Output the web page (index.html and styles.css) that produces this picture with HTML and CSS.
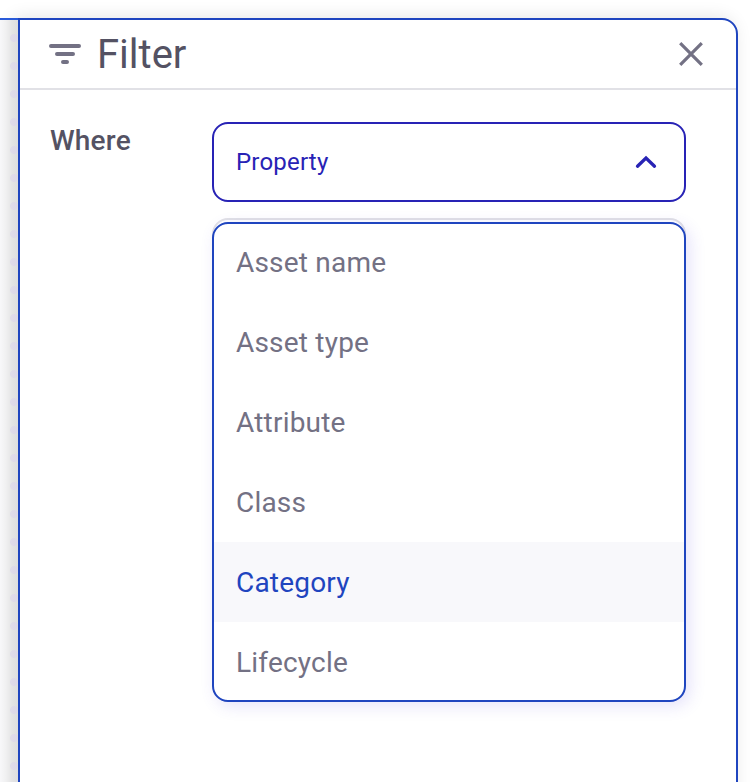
FILE: index.html
```html
<!DOCTYPE html>
<html lang="en">
<head>
<meta charset="utf-8">
<title>Filter</title>
<link rel="stylesheet" href="styles.css">
</head>
<body>
<main class="workspace">
  <div class="canvas"></div>
  <section class="panel">
    <header class="panel-header">
      <svg class="filter-icon" width="32" height="20" viewBox="0 0 32 20" fill="none" stroke="currentColor" stroke-width="4" stroke-linecap="round"><path d="M2 2H30M8 10H24M14 18H18"/></svg>
      <h1 class="title">Filter</h1>
      <button class="close" aria-label="Close"><svg width="24" height="24" viewBox="0 0 24 24" fill="none" stroke="currentColor" stroke-width="3.2"><path d="M1.2 1.2L22.8 22.8M22.8 1.2L1.2 22.8"/></svg></button>
    </header>
    <div class="panel-body">
      <span class="label">Where</span>
      <div class="field">
        <button class="select"><span class="select-text">Property</span><svg width="22" height="14" viewBox="0 0 22 14" fill="none" stroke="currentColor" stroke-width="3.3" stroke-linecap="round" stroke-linejoin="miter"><path d="M2.5 11.2L11 3L19.5 11.2"/></svg></button>
        <div class="next-field">
          <ul class="menu">
            <li class="option">Asset name</li>
            <li class="option">Asset type</li>
            <li class="option">Attribute</li>
            <li class="option">Class</li>
            <li class="option active">Category</li>
            <li class="option">Lifecycle</li>
          </ul>
        </div>
      </div>
    </div>
  </section>
</main>
</body>
</html>
```
FILE: styles.css
```css
* { box-sizing: border-box; }
body {
  margin: 0;
  height: 782px;
  overflow: hidden;
  background: #fff;
  color: #545263;
  font-family: Roboto, sans-serif;
}
.workspace {
  display: grid;
  grid-template-columns: 18px 720px;
  height: 782px;
  padding-top: 18px;
}
.canvas {
  z-index: 1;
  border-top: 2px solid #2a5bd9;
  background:
    radial-gradient(circle at 14px 14px, rgba(220, 212, 236, .6) 3.6px, transparent 4.4px) 0 4px / 28px 28px,
    linear-gradient(to right, #f8f8fa 0, #f0f0f1 6px, #e4e4e5 12px, #dededf 18px);
}
.panel {
  height: 784px;
  border: 2px solid #1f45bf;
  border-top-right-radius: 16px;
  background: #fff;
  box-shadow: -4px 0 18px rgba(0, 0, 0, .12);
}
.panel-header {
  display: flex;
  align-items: center;
  height: 70px;
  padding: 0 33px 0 29px;
  border-bottom: 2px solid #e1e1e6;
}
.filter-icon { color: #737184; }
.title {
  margin: 0 auto 0 16px;
  padding-top: 2px;
  font-size: 40px;
  font-weight: 400;
  line-height: 48px;
}
.close {
  display: flex;
  padding: 0;
  border: 0;
  background: none;
  color: #737184;
}
.panel-body {
  display: grid;
  grid-template-columns: 162px 474px;
  padding: 32px 0 0 30px;
}
.label {
  padding-top: 1px;
  font-size: 28px;
  font-weight: 500;
  line-height: 36px;
  letter-spacing: .2px;
}
.select {
  display: flex;
  align-items: center;
  justify-content: space-between;
  width: 100%;
  height: 80px;
  padding: 0 27px 0 22px;
  border: 2px solid #2823b5;
  border-radius: 16px;
  background: #fff;
  color: #2823b5;
  font: 400 24px/32px Roboto, sans-serif;
  letter-spacing: .2px;
}
.next-field {
  height: 80px;
  margin-top: 16px;
  padding-top: 2px;
  border: 2px solid #e1e1e6;
  border-radius: 16px;
}
.menu {
  width: 474px;
  height: 480px;
  margin: 0 -2px;
  padding: 0;
  overflow: hidden;
  list-style: none;
  border: 2px solid #1f45bf;
  border-radius: 16px;
  background: #fff;
  box-shadow: 4px 4px 16px rgba(80, 60, 220, .15);
}
.option {
  height: 80px;
  padding: 0 22px;
  color: #737184;
  font-size: 28px;
  line-height: 82px;
  letter-spacing: .2px;
}
.option:first-child {
  height: 78px;
  line-height: 78px;
}
.active {
  background: #f8f8fb;
  color: #1f45bf;
}
```
